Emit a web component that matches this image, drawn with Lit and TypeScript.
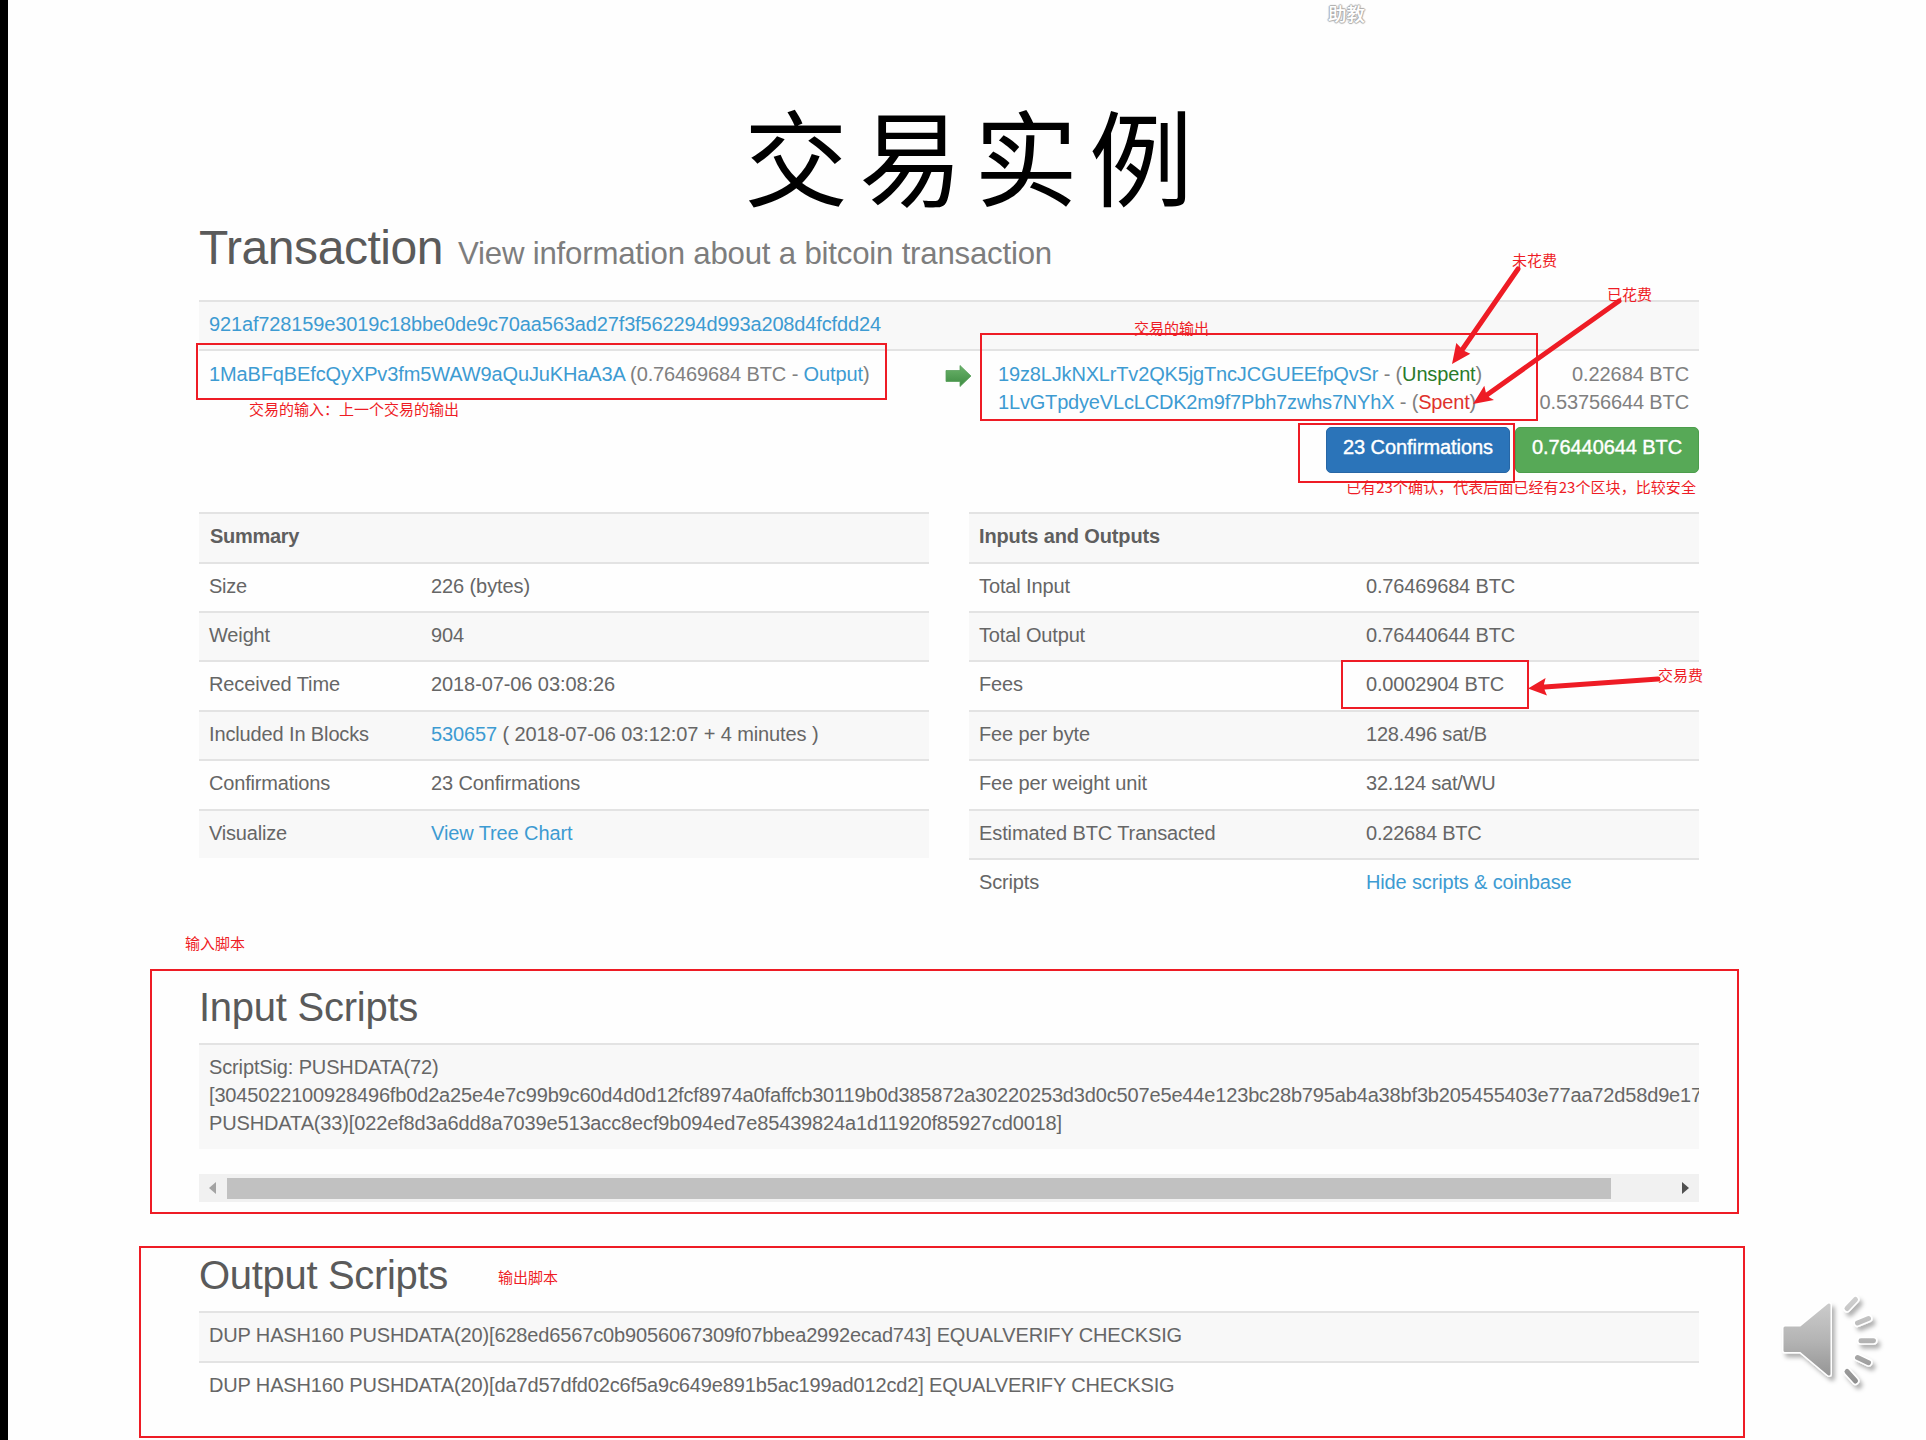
import { LitElement, html, css, svg, TemplateResult } from "lit";
import { customElement } from "lit/decorators.js";

type Cell = string | TemplateResult;
interface Row { label: string; labelWidth: number; value: Cell; valueWidth: number; }

const link = (text: string) => html`<a class="link">${text}</a>`;

/** Text run whose tracking is adjusted so it spans the given number of pixels. */
const run = (content: Cell, width: number) =>
  html`<span class="run" data-width=${width}>${content}</span>`;

const SUMMARY: Row[] = [
  { label: "Size", labelWidth: 38, value: "226 (bytes)", valueWidth: 99 },
  { label: "Weight", labelWidth: 61, value: "904", valueWidth: 33 },
  { label: "Received Time", labelWidth: 131, value: "2018-07-06 03:08:26", valueWidth: 184 },
  {
    label: "Included In Blocks", labelWidth: 160,
    value: html`${link("530657")} ( 2018-07-06 03:12:07 + 4 minutes )`, valueWidth: 387.5,
  },
  { label: "Confirmations", labelWidth: 121, value: "23 Confirmations", valueWidth: 149 },
  { label: "Visualize", labelWidth: 78, value: link("View Tree Chart"), valueWidth: 141.5 },
];

const IN_OUT: Row[] = [
  { label: "Total Input", labelWidth: 91, value: "0.76469684 BTC", valueWidth: 149 },
  { label: "Total Output", labelWidth: 106, value: "0.76440644 BTC", valueWidth: 149 },
  { label: "Fees", labelWidth: 44, value: "0.0002904 BTC", valueWidth: 138 },
  { label: "Fee per byte", labelWidth: 111, value: "128.496 sat/B", valueWidth: 121 },
  { label: "Fee per weight unit", labelWidth: 168, value: "32.124 sat/WU", valueWidth: 129.5 },
  { label: "Estimated BTC Transacted", labelWidth: 236.5, value: "0.22684 BTC", valueWidth: 115.5 },
  { label: "Scripts", labelWidth: 60, value: link("Hide scripts & coinbase"), valueWidth: 205.5 },
];

@customElement("app-root")
export class AppRoot extends LitElement {
  static styles = css`
    :host {
      display: block;
      position: relative;
      box-sizing: border-box;
      width: 1926px;
      height: 1440px;
      overflow: hidden;
      background: #fefefe;
      border-left: 8px solid #000;
      color: #666;
      font-family: "Liberation Sans", Arial, sans-serif;
      font-size: 20px;
      line-height: 27px;
    }
    .page { width: 1500px; margin-left: 191px; display: flex; flex-direction: column; }
    .title {
      height: 222px; box-sizing: border-box; padding: 82px 0 0 545px;
      font-family: KaiTi, STKaiti, "AR PL UKai CN", "Noto Sans CJK SC", serif;
      font-size: 104px; line-height: 144px; letter-spacing: 11px; color: #000; white-space: nowrap;
    }
    .run { white-space: pre; display: inline-block; }
    .link { color: #3d9bd2; }
    .heading { height: 78px; display: flex; align-items: baseline; gap: 15px; line-height: 52px; }
    .heading .big { font-size: 48px; color: #5a5a5a; }
    .heading .small { font-size: 31.2px; color: #7d7d7d; }
    .row {
      box-sizing: border-box; height: 49.4px; border-top: 2px solid #e3e3e3;
      padding: 9px 10px 0; display: flex; white-space: nowrap;
    }
    .row.alt { background: #f8f8f8; }
    .row.flow { height: 78px; padding-top: 8.2px; display: grid; grid-template-columns: 736px 53px 1fr auto; line-height: 28px; color: #808080; }
    .flow .col { display: flex; flex-direction: column; }
    .flow .amounts { align-items: flex-end; }
    .arrow { margin-top: 4px; display: block; }
    .unspent { color: #2a7a2a; }
    .spent { color: #e0322d; }
    .badges { display: flex; justify-content: flex-end; gap: 5px; height: 84.8px; }
    .badge {
      box-sizing: border-box; width: 184px; height: 46px; border-radius: 5px; color: #fff;
      padding-top: 6px; text-align: center; line-height: 27px; -webkit-text-stroke: 0.4px #fff;
    }
    .badge.blue { background: #2b74b9; border: 1px solid #2766a5; }
    .badge.green { background: #57a957; border: 1px solid #4c9d4c; }
    .tables { display: grid; grid-template-columns: 730px 730px; gap: 40px; height: 473.2px; align-items: start; }
    .row.caption { font-weight: bold; padding-left: 11px; color: #5f5f5f; }
    .wide .row.caption { padding-left: 10px; }
    .label { flex: none; width: 222px; }
    .wide .label { width: 387px; }
    .section { font-size: 40px; line-height: 44px; color: #5a5a5a; height: 58px; }
    .script {
      box-sizing: border-box; height: 106px; border-top: 2px solid #e3e3e3; background: #f8f8f8;
      padding: 7.6px 0 0 10px; overflow: hidden; line-height: 28px; display: flex; flex-direction: column; align-items: flex-start;
    }
    .scroll {
      margin-top: 25px; height: 28px; background: #f1f1f1; display: flex; align-items: center;
      padding: 0 10px; justify-content: space-between; box-sizing: border-box;
    }
    .thumb { width: 1384px; height: 21px; background: #c1c1c1; margin-right: 61px; }
    .output-title { margin-top: 51px; }
    .overlay { position: absolute; left: -8px; top: 0; width: 1926px; height: 1440px; }
    .note {
      position: absolute; color: #ee1c25; font-family: "Microsoft YaHei", "Noto Sans CJK SC", sans-serif;
      font-size: 15px; line-height: 20px; white-space: nowrap;
    }
    .n1 { left: 1512px; top: 250px; }
    .n2 { left: 1607px; top: 284px; }
    .n3 { left: 1134px; top: 318px; }
    .n4 { left: 249px; top: 399px; }
    .n5 { left: 1346px; top: 477px; }
    .n6 { left: 1658px; top: 665px; }
    .n7 { left: 185px; top: 933px; }
    .n8 { left: 498px; top: 1267px; }
    .watermark {
      position: absolute; left: 1328px; top: 1px; font: 500 18.5px/24px "Noto Sans CJK SC", sans-serif; color: #fff;
      text-shadow: 1px 0 1px #aaa, -1px 0 1px #aaa, 0 1px 1px #aaa, 0 -1px 1px #aaa;
    }
  `;

  protected firstUpdated() {
    this.renderRoot.querySelectorAll<HTMLElement>(".run").forEach((el) => {
      const count = (el.textContent ?? "").length;
      const target = Number(el.dataset.width);
      const natural = el.getBoundingClientRect().width;
      if (count) el.style.letterSpacing = `${(target - natural) / count}px`;
    });
  }

  private table(caption: string, width: number, rows: Row[], wide: boolean) {
    return html`<div class=${wide ? "table wide" : "table"}>
      <div class="row alt caption">${run(caption, width)}</div>
      ${rows.map((r, i) => html`<div class="row ${i % 2 ? "alt" : ""}">
        <span class="label">${run(r.label, r.labelWidth)}</span>
        <span>${run(r.value, r.valueWidth)}</span>
      </div>`)}
    </div>`;
  }

  private annotations() {
    const boxes = [
      [196, 343, 691, 57], [980, 333, 558, 88], [1298, 423, 217, 60],
      [1341, 660, 188, 49], [150, 969, 1589, 245], [139, 1246, 1606, 192],
    ];
    return svg`
      <g fill="none" stroke="#ee1c25" stroke-width="2">
        ${boxes.map(([x, y, w, h]) => svg`<rect x=${x + 1} y=${y + 1} width=${w - 2} height=${h - 2} />`)}
      </g>
      <g stroke="#ee1c25" stroke-width="5" stroke-linecap="round">
        <path d="M1518 269L1462 350M1619 301L1484 397M1658 679L1541 687.2" />
      </g>
      <g fill="#ee1c25">
        <path d="M1452 364L1456.3 343L1461.5 348.5L1464.5 351L1470.3 353.7Z" />
        <path d="M1473 404L1484.3 385.7L1486 393L1489.5 397.5L1494 400Z" />
        <path d="M1528 688.5L1545.6 678L1544 684L1544.6 690L1547 695.5Z" />
      </g>`;
  }

  private speaker() {
    return svg`
      <defs>
        <linearGradient id="metal" gradientUnits="userSpaceOnUse" x1="0" y1="1298" x2="0" y2="1383">
          <stop offset="0" stop-color="#cfcfcf" /><stop offset="0.5" stop-color="#b4b4b4" /><stop offset="1" stop-color="#8f8f8f" />
        </linearGradient>
        <filter id="lift" x="-20%" y="-20%" width="150%" height="150%">
          <feDropShadow dx="3" dy="4" stdDeviation="2.2" flood-color="#000" flood-opacity="0.3" />
        </filter>
      </defs>
      <g filter="url(#lift)" stroke-linecap="round" stroke-linejoin="round">
        <g stroke="#fff" fill="#fff">
          <path stroke-width="6" d="M1785 1328H1801L1829 1305V1374L1801 1350.5H1785Z" />
          <path stroke-width="8" d="M1847 1308.5L1855.5 1299.5M1857.5 1323L1868.5 1318.5M1861 1340.7H1873.5M1857.5 1357.5L1868.5 1362.7M1847 1371.5L1855.5 1381" />
        </g>
      </g>
      <g stroke="url(#metal)" fill="url(#metal)" stroke-linecap="round" stroke-linejoin="round">
        <path stroke-width="3" d="M1785 1328H1801L1829 1305V1374L1801 1350.5H1785Z" />
        <path fill="none" stroke-width="5" d="M1847 1308.5L1855.5 1299.5M1857.5 1323L1868.5 1318.5M1861 1340.7L1873.5 1340.8M1857.5 1357.5L1868.5 1362.7M1847 1371.5L1855.5 1381" />
      </g>`;
  }

  render() {
    return html`
      <main class="page">
        <div class="title">交易实例</div>
        <div class="heading">
          <span class="big">${run("Transaction", 244)}</span>
          <span class="small">${run("View information about a bitcoin transaction", 594)}</span>
        </div>
        <div class="row alt">
          ${run(link("921af728159e3019c18bbe0de9c70aa563ad27f3f562294d993a208d4fcfdd24"), 672)}
        </div>
        <div class="row flow">
          <div class="col"><span>${run(html`${link("1MaBFqBEfcQyXPv3fm5WAW9aQuJuKHaA3A")} (0.76469684 BTC - ${link("Output")})`, 660.5)}</span></div>
          <svg class="arrow" width="27" height="24" viewBox="0 0 27 24">
            <defs><linearGradient id="leaf" x1="0" y1="0" x2="0" y2="1">
              <stop offset="0" stop-color="#6cb46c" /><stop offset="1" stop-color="#3d8b41" />
            </linearGradient></defs>
            <path d="M1 6.5H15V1.5L26 12L15 22.5V17.5H1Z" fill="url(#leaf)" stroke="#58a05a" stroke-width="0.8" />
          </svg>
          <div class="col">
            <span>${run(html`${link("19z8LJkNXLrTv2QK5jgTncJCGUEEfpQvSr")} - (<span class="unspent">Unspent</span>)`, 484)}</span>
            <span>${run(html`${link("1LvGTpdyeVLcLCDK2m9f7Pbh7zwhs7NYhX")} - (<span class="spent">Spent</span>)`, 478)}</span>
          </div>
          <div class="col amounts">${run("0.22684 BTC", 117)}${run("0.53756644 BTC", 149.5)}</div>
        </div>
        <div class="badges">
          <div class="badge blue">${run("23 Confirmations", 150)}</div>
          <div class="badge green">${run("0.76440644 BTC", 150)}</div>
        </div>
        <div class="tables">
          ${this.table("Summary", 89, SUMMARY, false)}
          ${this.table("Inputs and Outputs", 181, IN_OUT, true)}
        </div>
        <div class="section">${run("Input Scripts", 219)}</div>
        <div class="script">
          ${run("ScriptSig: PUSHDATA(72)", 229.5)}
          ${run("[3045022100928496fb0d2a25e4e7c99b9c60d4d0d12fcf8974a0faffcb30119b0d385872a30220253d3d0c507e5e44e123bc28b795ab4a38bf3b205455403e77aa72d58d9e17", 1493)}
          ${run("PUSHDATA(33)[022ef8d3a6dd8a7039e513acc8ecf9b094ed7e85439824a1d11920f85927cd0018]", 853)}
        </div>
        <div class="scroll">
          <svg width="7" height="12"><path d="M7 0V12L0 6Z" fill="#a3a3a3" /></svg>
          <div class="thumb"></div>
          <svg width="7" height="12"><path d="M0 0V12L7 6Z" fill="#505050" /></svg>
        </div>
        <div class="section output-title">${run("Output Scripts", 249)}</div>
        <div class="row alt">${run("DUP HASH160 PUSHDATA(20)[628ed6567c0b9056067309f07bbea2992ecad743] EQUALVERIFY CHECKSIG", 973)}</div>
        <div class="row">${run("DUP HASH160 PUSHDATA(20)[da7d57dfd02c6f5a9c649e891b5ac199ad012cd2] EQUALVERIFY CHECKSIG", 965.5)}</div>
      </main>
      <div class="overlay">
        <span class="watermark">助教</span>
        <span class="note n1">未花费</span>
        <span class="note n2">已花费</span>
        <span class="note n3">交易的输出</span>
        <span class="note n4">${run("交易的输入：上一个交易的输出", 210)}</span>
        <span class="note n5">${run("已有23个确认，代表后面已经有23个区块，比较安全", 350)}</span>
        <span class="note n6">交易费</span>
        <span class="note n7">输入脚本</span>
        <span class="note n8">输出脚本</span>
        <svg class="overlay-art" width="1926" height="1440" viewBox="0 0 1926 1440">
          ${this.annotations()}${this.speaker()}
        </svg>
      </div>
    `;
  }
}
